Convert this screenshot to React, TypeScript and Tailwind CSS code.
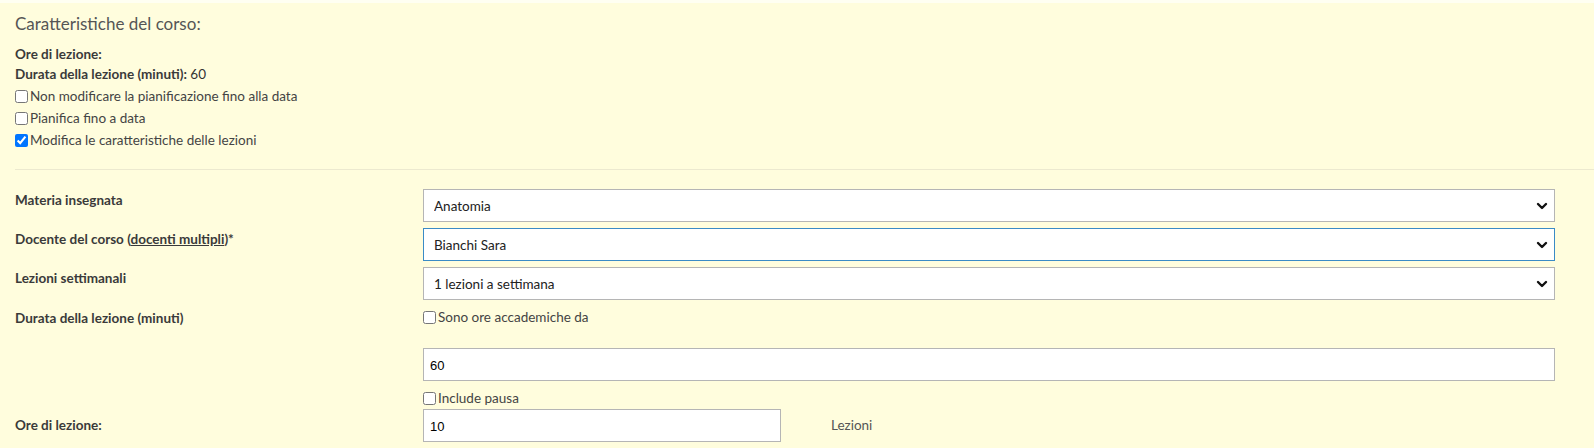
import React from "react";

const font = { fontFamily: "Lato, 'Noto Sans', sans-serif" };

function Chevron() {
  return (
    <svg
      className="pointer-events-none absolute right-[7px] top-1/2 h-[10px] w-[12px] -translate-y-1/2"
      viewBox="0 0 12 10"
      fill="none"
    >
      <path d="M2 3l4 4 4-4" stroke="#111" strokeWidth="2.4" strokeLinecap="round" strokeLinejoin="round" />
    </svg>
  );
}

function SelectBox({ value, focused }: { value: string; focused?: boolean }) {
  return (
    <div className="relative">
      <select
        defaultValue={value}
        className={`h-[33px] w-full appearance-none bg-white pl-[10px] pt-[2px] text-[13.5px] text-[#222] outline-none ${
          focused ? "border border-[#3a8bc6]" : "border border-[#b5b5b5]"
        }`}
      >
        <option>{value}</option>
      </select>
      <Chevron />
    </div>
  );
}

function Check({ label, checked }: { label: string; checked?: boolean }) {
  return (
    <label className="flex h-[20px] items-center text-[13.5px] text-[#444]">
      <input type="checkbox" defaultChecked={checked} className="m-0 mr-[2px] h-[13px] w-[13px]" />
      <span>{label}</span>
    </label>
  );
}

export default function App() {
  return (
    <div className="min-h-[448px] w-full bg-[#fffddd]" style={font}>
      <div className="h-[3px] bg-[#fffff2]" />
      <div className="pl-[15px]">
        <h2 className="pt-[9px] text-[17px] leading-[24px] text-[#555]">Caratteristiche del corso:</h2>
        <div className="mt-[10px] text-[13.5px] text-[#333]">
          <div className="h-[19px] font-bold leading-[17px] text-[#3a3a3a]">Ore di lezione:</div>
          <div className="h-[21px] leading-[19px]">
            <span className="font-bold text-[#3a3a3a]">Durata della lezione (minuti):</span> 60
          </div>
          <div className="flex flex-col gap-[2px]">
            <Check label="Non modificare la pianificazione fino alla data" />
            <Check label="Pianifica fino a data" />
            <Check label="Modifica le caratteristiche delle lezioni" checked />
          </div>
        </div>
        <div className="mt-[19px] border-t border-[#ece9cf]" />

        <div className="grid grid-cols-[408px_1fr] pr-[39px] pt-[19px] text-[13.5px]">
          <div className="pt-[1px] font-bold text-[#3a3a3a]">Materia insegnata</div>
          <SelectBox value="Anatomia" />

          <div className="mt-[6px] pt-[1px] font-bold text-[#3a3a3a]">
            Docente del corso (<span className="underline">docenti multipli</span>)*
          </div>
          <div className="mt-[6px]">
            <SelectBox value="Bianchi Sara" focused />
          </div>

          <div className="mt-[6px] pt-[1px] font-bold text-[#3a3a3a]">Lezioni settimanali</div>
          <div className="mt-[6px]">
            <SelectBox value="1 lezioni a settimana" />
          </div>

          <div className="mt-[7px] pt-[1px] font-bold text-[#3a3a3a]">Durata della lezione (minuti)</div>
          <div className="mt-[7px]">
            <Check label="Sono ore accademiche da" />
            <input
              defaultValue="60"
              className="mt-[21px] h-[33px] w-full border border-[#b5b5b5] bg-white pl-[6px] pt-[1px] text-[13px] text-black outline-none"
              style={{ fontFamily: "'Liberation Sans', Arial, sans-serif" }}
            />
            <div className="mt-[7px]">
              <Check label="Include pausa" />
            </div>
          </div>

          <div className="flex items-center font-bold text-[#3a3a3a]">Ore di lezione:</div>
          <div className="mt-[1px] flex items-center">
            <input
              defaultValue="10"
              className="h-[33px] w-[358px] border border-[#b5b5b5] bg-white pl-[6px] pt-[1px] text-[13px] text-black outline-none"
              style={{ fontFamily: "'Liberation Sans', Arial, sans-serif" }}
            />
            <span className="ml-[50px] text-[13.5px] text-[#555]">Lezioni</span>
          </div>
        </div>
      </div>
    </div>
  );
}
